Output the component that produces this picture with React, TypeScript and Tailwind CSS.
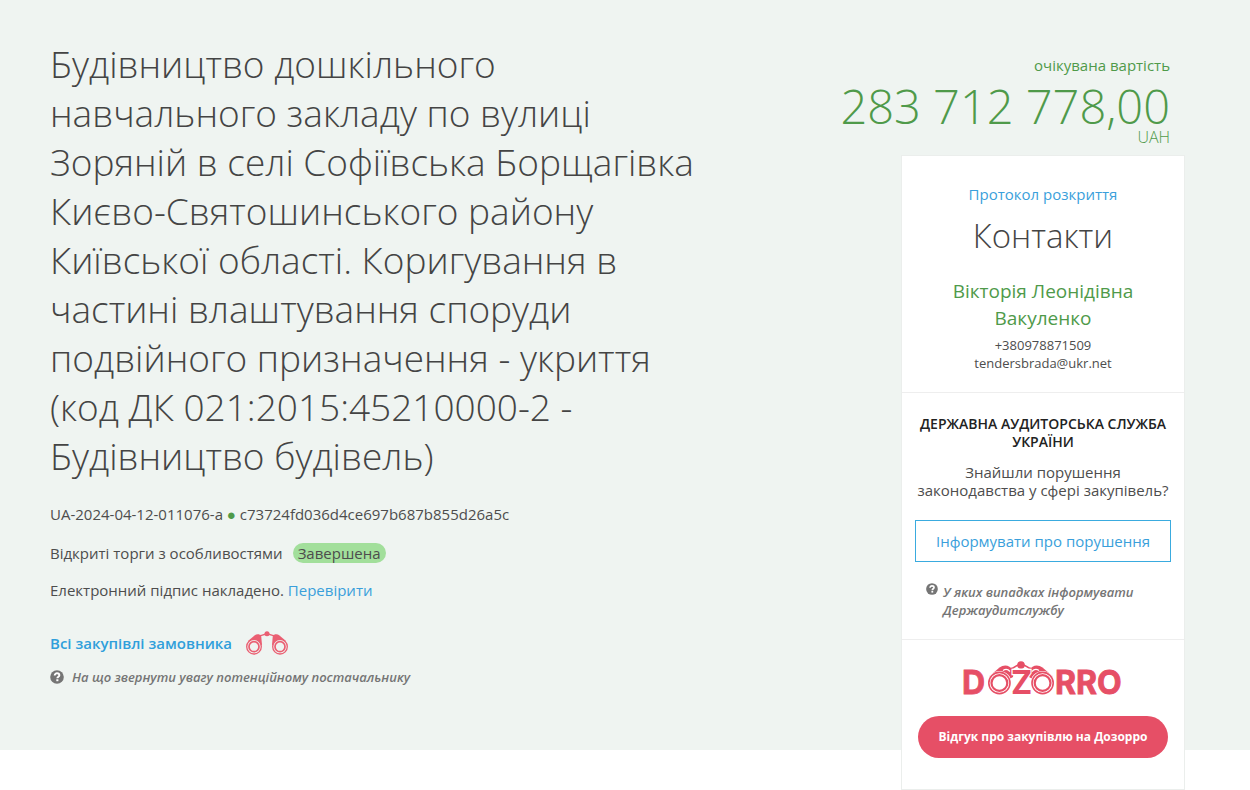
function HelpIcon({ className }: { className: string }) {
  return (
    <svg viewBox="0 0 16 16" className={className} aria-hidden="true">
      <circle cx="8" cy="8" r="7.8" fill="#757575" />
      <path d="M5.4 6.3C5.4 4.6 6.6 3.8 8 3.8s2.7.8 2.7 2.2c0 1.7-2.3 1.7-2.3 3.5" fill="none" stroke="white" strokeWidth="2.2" />
      <rect x="7.2" y="10.6" width="2.4" height="2.2" fill="white" />
    </svg>
  );
}

function Binoculars() {
  return (
    <svg viewBox="0 0 42 24" className="h-6 w-[42px]" role="img" aria-label="Dozorro">
      <path d="M14 4.6C17 4.2 18 3 21 3s4 1.2 7 1.6" fill="none" stroke="#ea5f72" strokeWidth="1.3" />
      <g fill="#ea5f72">
        <path d="M2 10L8.5 4.5c2.2-1.8 5.5-1.5 6.7.5L16 14Z" />
        <path d="M40 10L33.5 4.5c-2.2-1.8-5.5-1.5-6.7.5L26 14Z" />
        <circle cx="21" cy="2.8" r="2.5" />
      </g>
      {[8, 34].map((cx) => (
        <g key={cx} fill="#eff4f1" stroke="#ea5f72">
          <circle cx={cx} cy="15.7" r="7.3" strokeWidth="1.3" />
          <circle cx={cx} cy="15.7" r="5" strokeWidth="1.7" />
        </g>
      ))}
    </svg>
  );
}

function DozorroLogo() {
  return (
    <svg viewBox="-4 -6 168 52" className="h-[52px] w-[168px]" role="img" aria-label="Dozorro">
      <path d="M48 9.5C52 9 53 5.5 58 5.5S64 9 68 9.5" fill="none" stroke="#e64f66" strokeWidth="1.7" />
      <g fill="#e64f66">
        <path d="M26 17.5L36.5 8.5C41 5 47 6 49.5 11c1 2.500 1 4 .5 7L36 26Z" />
        <path d="M90 17.5L79.5 8.5C75 5 69 6 66.5 11c-1 2.500-1 4-.5 7L80 26Z" />
      </g>
      <circle cx="58" cy="6" r="3.8" fill="#e64f66" />
      <path d="M40 11.5q4-2.500 7 1M76 11.500q-4-2.500-7 1" fill="none" stroke="white" strokeWidth="1.2" />
      {[36.4, 79.6].map((cx) => (
        <g key={cx} fill="white">
          <circle cx={cx} cy="24" r="12" />
          <circle cx={cx} cy="24" r="10.6" stroke="#e64f66" strokeWidth="1.6" />
          <circle cx={cx} cy="24" r="7.9" stroke="#e64f66" strokeWidth="2.2" />
        </g>
      ))}
      <g fill="#e64f66" fontFamily="Inter, sans-serif" fontWeight="700" fontSize="32">
        <text x="-1" y="35" stroke="#e64f66" strokeWidth="0.8">D</text>
        <text x="48" y="35" stroke="white" strokeWidth="2.4" style={{ paintOrder: "stroke" }}>Z</text>
        <text x="92" y="35" stroke="#e64f66" strokeWidth="0.8">RRO</text>
      </g>
    </svg>
  );
}

export default function App() {
  return (
    <main className="min-h-screen bg-white font-['Open_Sans',sans-serif] text-[#4d4d4d]">
      <section className="bg-[#eff4f1] pr-[65px] pl-[50px]">
        <div className="grid grid-cols-12">
          <div className="col-span-7 pt-[39px] pb-[60px] text-[15px] leading-5">
            <h1 className="text-[37px] leading-[49px] font-light text-[#444]">
              Будівництво дошкільного навчального закладу по вулиці Зоряній в селі Софіївська Борщагівка
              Києво-Святошинського району Київської області. Коригування в частині влаштування споруди подвійного
              призначення - укриття (код ДК 021:2015:45210000-2 - Будівництво будівель)
            </h1>
            <div className="mt-6">
              UA-2024-04-12-011076-a <span className="text-[#4f9a4a]">●</span> c73724fd036d4ce697b687b855d26a5c
            </div>
            <div className="mt-[19px] flex items-center gap-2.5">
              <span>Відкриті торги з особливостями</span>
              <span className="rounded-full bg-[#a2df9b] px-[5px]">Завершена</span>
            </div>
            <div className="mt-[17px]">
              Електронний підпис накладено.{" "}
              <a href="#signature" className="text-[#3a9fdb]">Перевірити</a>
            </div>
            <div className="mt-[31px] flex items-center gap-3.5">
              <a href="#purchases" className="font-semibold text-[#2f9fdb]">Всі закупівлі замовника</a>
              <a href="#dozorro"><Binoculars /></a>
            </div>
            <a href="#tips" className="mt-3 flex items-center gap-2 text-[13px] font-semibold text-[#757575] italic">
              <HelpIcon className="size-[14px]" />
              На що звернути увагу потенційному постачальнику
            </a>
          </div>

          <div className="col-span-5 -mb-10 flex flex-col items-end pt-[55px]">
            <div className="flex flex-col pr-[15px] text-right text-[#4f9a4a]">
              <span className="text-[15px] leading-5">очікувана вартість</span>
              <strong className="text-[47px] leading-[62px] font-light">283 712 778,00</strong>
              <span className="-mt-[10px] text-[16px] leading-5 font-light">UAH</span>
            </div>
            <aside className="mt-2 w-[284px] border border-[#ebeeec] bg-white text-center">
              <div className="border-b border-[#eee] px-10 pt-7 pb-5">
                <a href="#protocol" className="block text-[15px] leading-5 text-[#3a9fdb]">Протокол розкриття</a>
                <h2 className="mt-2 text-[33px] leading-[48px] font-light text-[#444]">Контакти</h2>
                <p className="mt-[18px] text-[19px] leading-[27px] text-[#4f9a4a]">Вікторія Леонідівна Вакуленко</p>
                <p className="mt-1 text-[13px] leading-[18px]">
                  +380978871509
                  <br />
                  tendersbrada@ukr.net
                </p>
              </div>
              <div className="border-b border-[#eee] px-[13px] pt-[22px] pb-5 text-[15px] leading-[18px]">
                <h3 className="text-[14px] font-semibold text-[#222]">ДЕРЖАВНА АУДИТОРСЬКА СЛУЖБА УКРАЇНИ</h3>
                <p className="mt-3">Знайшли порушення законодавства у сфері закупівель?</p>
                <button type="button" className="mt-[21px] h-[42px] w-full border border-[#3aabdf] text-[#3a9fdb]">
                  Інформувати про порушення
                </button>
                <a href="#cases" className="mt-[21px] flex gap-[5px] pl-[11px] text-left text-[13px] font-semibold text-[#757575] italic">
                  <HelpIcon className="size-3 shrink-0" />
                  У яких випадках інформувати Держаудитслужбу
                </a>
              </div>
              <div className="flex flex-col items-center px-4 pt-[13px] pb-[31px]">
                <a href="#dozorro"><DozorroLogo /></a>
                <button type="button" className="mt-[11px] h-[42px] w-full rounded-full bg-[#e64f66] text-[12px] font-bold text-white">
                  Відгук про закупівлю на Дозорро
                </button>
              </div>
            </aside>
          </div>
        </div>
      </section>
    </main>
  );
}
